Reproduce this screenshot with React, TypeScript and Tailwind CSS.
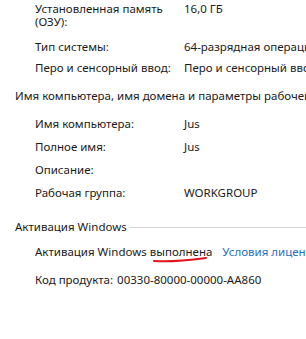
export default function App() {
  const font = { fontFamily: '"Noto Sans", "Open Sans", sans-serif' };
  return (
    <div className="relative w-[306px] h-[339px] overflow-hidden bg-white text-[11.5px] leading-[15px] text-[#1a1a1a]" style={font}>
      {/* System section */}
      <div className="pl-[35px] pt-[2px]">
        <div className="flex">
          <div className="w-[149px] shrink-0 leading-[13px]">
            Установленная память
            <br />
            (ОЗУ):
          </div>
          <div className="leading-[13px] whitespace-nowrap">16,0 ГБ</div>
        </div>
        <div className="flex mt-[11px]">
          <div className="w-[149px] shrink-0">Тип системы:</div>
          <div className="whitespace-nowrap">64-разрядная операционная система</div>
        </div>
        <div className="flex mt-[6px]">
          <div className="w-[149px] shrink-0">Перо и сенсорный ввод:</div>
          <div className="whitespace-nowrap">Перо и сенсорный ввод недоступны</div>
        </div>
      </div>

      {/* Computer name section */}
      <div className="pl-[15px] mt-[13px] whitespace-nowrap">
        Имя компьютера, имя домена и параметры рабочей группы
      </div>
      <div className="pl-[35px] mt-[13px] flex flex-col gap-[8px]">
        <div className="flex">
          <div className="w-[149px] shrink-0">Имя компьютера:</div>
          <div>Jus</div>
        </div>
        <div className="flex">
          <div className="w-[149px] shrink-0">Полное имя:</div>
          <div>Jus</div>
        </div>
        <div className="flex">
          <div className="w-[149px] shrink-0">Описание:</div>
          <div></div>
        </div>
        <div className="flex">
          <div className="w-[149px] shrink-0">Рабочая группа:</div>
          <div>WORKGROUP</div>
        </div>
      </div>

      {/* Activation section */}
      <div className="pl-[15px] mt-[19px] flex items-center gap-[2px]">
        <span className="whitespace-nowrap">Активация Windows</span>
        <div className="flex-1 h-px bg-[#d5d5d5] mt-[1px]" />
      </div>
      <div className="pl-[35px] mt-[10px] flex whitespace-nowrap">
        <span>
          Активация Windows{' '}
          <span className="relative">
            выполнена
            <svg className="absolute left-[3px] top-[12px]" width="56" height="8" viewBox="0 0 56 8">
              <path d="M1 5 C 14 6, 30 5, 53 2" stroke="#e0141a" strokeWidth="2" fill="none" strokeLinecap="round" />
            </svg>
          </span>
        </span>
        <span className="ml-[10px] text-[#1f6fc5]">Условия лицензионного соглашения</span>
      </div>
      <div className="pl-[35px] mt-[13px] flex whitespace-nowrap">
        <span>Код продукта:</span>
        <span className="ml-[4px]">00330-80000-00000-AA860</span>
      </div>
    </div>
  );
}
